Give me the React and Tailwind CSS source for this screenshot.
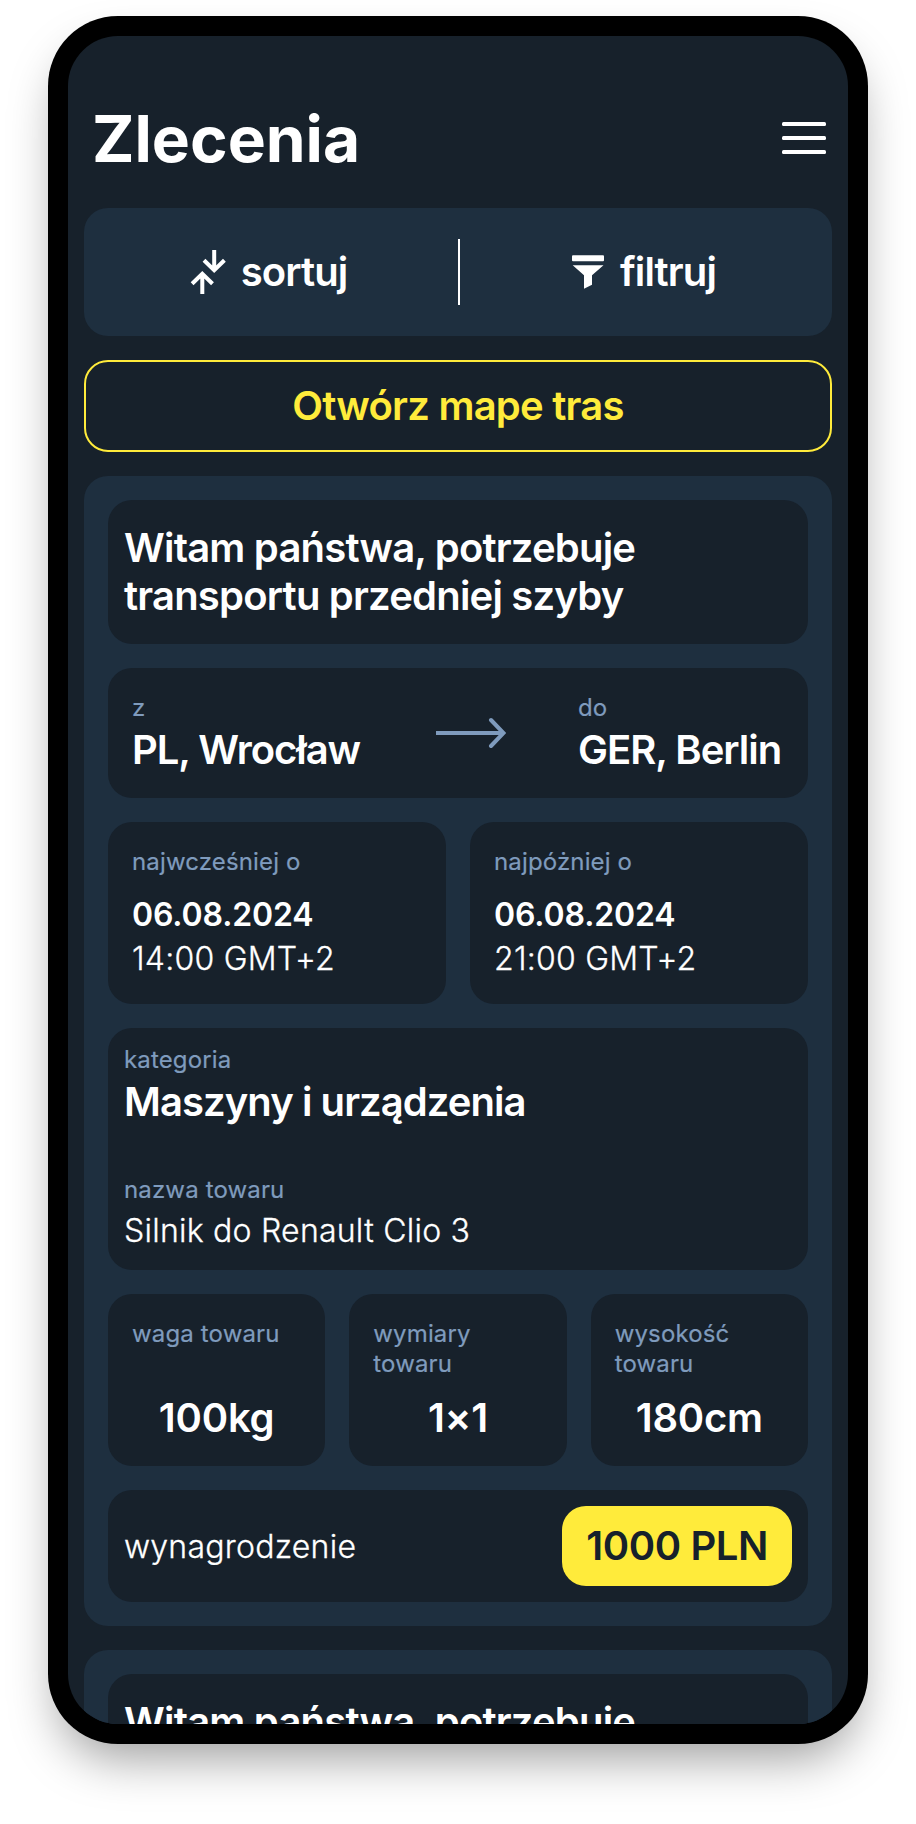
const Tile = ({ className = '', children }) => (
  <div className={`rounded-3xl bg-[#17212b] ${className}`}>{children}</div>
);

const Label = ({ children }) => (
  <p className="-mb-px pt-px text-[24px] leading-[30px] font-normal tracking-[0.006em] text-[#7f9bbd] [-webkit-text-stroke:0.2px]">
    {children}
  </p>
);

const Body = ({ children }) => (
  <p className="-mb-px pt-px text-[32px] leading-[44px] font-light tracking-[0.0075em] [-webkit-text-stroke:0.3px]">
    {children}
  </p>
);

const Heading = ({ tracking = 'tracking-[-0.022em]', className = '', children }) => (
  <p className={`text-[40px] leading-[48px] font-semibold ${tracking} ${className}`}>{children}</p>
);

const SortIcon = () => (
  <svg className="h-12 w-12 shrink-0" viewBox="0 0 48 48" fill="none" stroke="currentColor" strokeWidth="4">
    <path d="M29.2 2v20M19 12.2l10.2 10 10.2-10" />
    <path d="M17.3 46V26M7.1 35.8l10.2-10 10.2 10" />
  </svg>
);

const FilterIcon = () => (
  <svg className="h-12 w-12 shrink-0" viewBox="0 0 48 48" fill="currentColor">
    <rect x="8" y="7.3" width="32" height="6" rx="1" />
    <path d="M8.7 17.2h30.8L28 27.2v9.6l-8 4V27.2z" />
  </svg>
);

const MenuIcon = () => (
  <svg className="h-8 w-11" viewBox="0 0 44 32" fill="currentColor">
    <rect width="44" height="4" rx="1.5" />
    <rect y="14" width="44" height="4" rx="1.5" />
    <rect y="28" width="44" height="4" rx="1.5" />
  </svg>
);

const ArrowIcon = () => (
  <svg className="h-8 w-[70px]" viewBox="0 0 70 32" fill="none" stroke="#7f9bbd" strokeWidth="4">
    <path d="M0 16h67" />
    <path d="M55 3l12.5 13L55 29" strokeLinecap="round" />
  </svg>
);

const DateTile = ({ label, date, time }) => (
  <Tile className="p-6">
    <Label>{label}</Label>
    <p className="mt-[17px] -mb-px text-[32px] leading-[44px] font-semibold tracking-[-0.004em]">{date}</p>
    <Body>{time}</Body>
  </Tile>
);

const SizeTile = ({ label, value }) => (
  <Tile className="flex flex-col justify-between p-6">
    <Label>{label}</Label>
    <Heading tracking="tracking-[-0.005em]" className="text-center">{value}</Heading>
  </Tile>
);

const OrderCard = () => (
  <article className="flex shrink-0 flex-col gap-6 rounded-3xl bg-[#1e2f3f] p-6">
    <Tile className="px-4 py-6">
      <Heading tracking="tracking-[-0.02em]">
        Witam państwa, potrzebuje
        <br />
        transportu przedniej szyby
      </Heading>
    </Tile>
    <Tile className="flex h-[130px] items-center justify-between p-6">
      <div className="flex w-[232px] flex-col gap-1">
        <Label>z</Label>
        <Heading tracking="tracking-[-0.026em]">PL, Wrocław</Heading>
      </div>
      <ArrowIcon />
      <div className="flex w-[206px] flex-col gap-1">
        <Label>do</Label>
        <Heading tracking="tracking-[-0.025em]">GER, Berlin</Heading>
      </div>
    </Tile>
    <div className="grid h-[182px] grid-cols-2 gap-6">
      <DateTile label="najwcześniej o" date="06.08.2024" time="14:00 GMT+2" />
      <DateTile label="najpóżniej o" date="06.08.2024" time="21:00 GMT+2" />
    </div>
    <Tile className="flex h-[242px] flex-col gap-12 px-4 pt-4">
      <div className="flex flex-col gap-1">
        <Label>kategoria</Label>
        <Heading tracking="tracking-[-0.0235em]">Maszyny i urządzenia</Heading>
      </div>
      <div className="flex flex-col gap-1">
        <Label>nazwa towaru</Label>
        <Body>Silnik do Renault Clio 3</Body>
      </div>
    </Tile>
    <div className="grid h-[172px] grid-cols-3 gap-6">
      <SizeTile label="waga towaru" value="100kg" />
      <SizeTile label="wymiary towaru" value="1×1" />
      <SizeTile label="wysokość towaru" value="180cm" />
    </div>
    <Tile className="flex items-center justify-between p-4">
      <Body>wynagrodzenie</Body>
      <div className="rounded-3xl bg-[#ffeb3b] px-6 py-4 text-[#17212b]">
        <Heading tracking="tracking-[-0.01em]">1000 PLN</Heading>
      </div>
    </Tile>
  </article>
);

export default function App() {
  return (
    <div className="h-[1824px] w-[916px] overflow-hidden bg-white px-12 pt-4 font-['Inter',sans-serif] text-white">
      <main className="h-[1728px] w-[820px] rounded-[70px] bg-black p-5 shadow-[0_25px_50px_-12px_rgba(0,0,0,0.4)]">
        <div className="flex h-full flex-col gap-6 overflow-hidden rounded-[50px] bg-[#17212b] px-4">
          <header className="flex h-[148px] shrink-0 items-center justify-between pt-[56px] pr-1.5 pl-2">
            <h1 className="pt-0.5 text-[64px] leading-[76px] font-bold">Zlecenia</h1>
            <MenuIcon />
          </header>
          <div className="flex h-32 shrink-0 items-center rounded-3xl bg-[#1e2f3f]">
            <button className="flex w-[374px] items-center justify-center gap-2 pr-2.5">
              <SortIcon />
              <Heading>sortuj</Heading>
            </button>
            <div className="h-[66px] w-0.5 bg-white" />
            <button className="flex flex-1 items-center justify-center gap-2 pr-3">
              <FilterIcon />
              <Heading>filtruj</Heading>
            </button>
          </div>
          <button className="h-[92px] shrink-0 rounded-3xl border-2 border-[#ffeb3b] text-[#ffeb3b]">
            <Heading tracking="tracking-[-0.019em]">Otwórz mape tras</Heading>
          </button>
          <OrderCard />
          <OrderCard />
        </div>
      </main>
    </div>
  );
}
